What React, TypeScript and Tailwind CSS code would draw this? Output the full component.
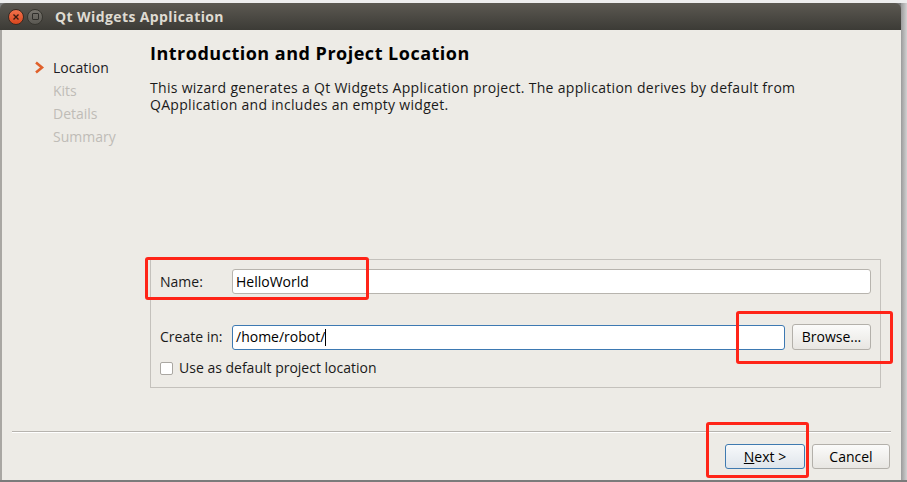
import React from "react";

// Qt Creator "new project" wizard, first page, with red marks laid over it
export default function App() {
  const font = { fontFamily: '"Open Sans", "Noto Sans", sans-serif' };

  return (
    <div
      className="relative w-[907px] h-[482px] overflow-hidden bg-[#7b7b7b] text-[14px] text-[#1a1a1a]"
      style={font}
    >
      {/* strip of the desktop behind the window */}
      <div className="h-[3px] bg-[#eeeeee]" />

      <div className="flex">
        {/* --- Window --- */}
        <div className="w-[901px] flex flex-col">
          {/* title bar */}
          <div className="h-[27px] rounded-t-[6px] bg-gradient-to-b from-[#5c5952] to-[#3c3b36] flex items-center pl-[8px]">
            <div className="w-[16px] h-[16px] rounded-full bg-gradient-to-b from-[#f3714a] to-[#d9461d] border border-[#3a2a22] flex items-center justify-center">
              <svg width="8" height="8" viewBox="0 0 8 8">
                <path d="M1.5 1.5 L6.5 6.5 M6.5 1.5 L1.5 6.5" stroke="#3b1b10" strokeWidth="1.4" />
              </svg>
            </div>
            <div className="ml-[3px] w-[16px] h-[16px] rounded-full bg-gradient-to-b from-[#77746d] to-[#5a5852] border border-[#36352f] flex items-center justify-center">
              <div className="w-[7px] h-[7px] border border-[#2f2e2a] rounded-[1px]" />
            </div>
            <div className="ml-[12px] font-bold text-[14px] tracking-[0.4px] text-[#dfdbd2]">Qt Widgets Application</div>
          </div>

          {/* window body */}
          <div className="h-[450px] bg-[#edebe6] border-l-2 border-[#a9a7a3] flex flex-col">
            <div className="flex h-[401px]">
              {/* sidebar */}
              <div className="w-[148px] pt-[26px] pl-[32px]">
                <div className="flex items-center h-[23px]">
                  <svg width="11" height="13" viewBox="0 0 11 13" className="mr-[8px]">
                    <path d="M2 1.5 L8 6.5 L2 11.5" fill="none" stroke="#e0602a" strokeWidth="2.6" strokeLinejoin="miter" />
                  </svg>
                  <span className="text-[#1c1c24]">Location</span>
                </div>
                <div className="pl-[19px] h-[23px] leading-[23px] text-[#bfbcb7]">Kits</div>
                <div className="pl-[19px] h-[23px] leading-[23px] text-[#bfbcb7]">Details</div>
                <div className="pl-[19px] h-[23px] leading-[23px] text-[#bfbcb7]">Summary</div>
              </div>

              {/* page */}
              <div className="flex-1 pt-[11px]">
                <h1 className="font-bold text-[18px] leading-[24px] tracking-[0.5px] text-black">
                  Introduction and Project Location
                </h1>
                <p className="mt-[14px] text-[14px] leading-[17px] tracking-[0.3px] text-[#1a1a1a] w-[700px]">
                  This wizard generates a Qt Widgets Application project. The application derives by default from
                  <br />
                  QApplication and includes an empty widget.
                </p>

                {/* group box */}
                <div className="mt-[146px] w-[731px] border border-[#c4c1bc] pt-[9px] pl-[9px] pr-[9px] pb-[11px] leading-[16px]">
                  <div className="flex items-center">
                    <div className="w-[72px]">Name:</div>
                    <div className="flex-1 h-[25px] bg-white border border-[#b7b4ae] rounded-[3px] pl-[3px] flex items-center text-black">
                      HelloWorld
                    </div>
                  </div>
                  <div className="flex items-center mt-[30px]">
                    <div className="w-[72px]">Create in:</div>
                    <div className="flex-1 h-[25px] bg-white border border-[#3d79b2] rounded-[3px] pl-[3px] flex items-center text-black">
                      /home/robot/
                      <span className="w-px h-[17px] bg-black" />
                    </div>
                    <button className="ml-[7px] w-[79px] h-[26px] rounded-[3px] border border-[#b3b0aa] bg-gradient-to-b from-[#fbfbfa] to-[#e8e6e2] text-black">
                      Browse...
                    </button>
                  </div>
                  <div className="flex items-center mt-[10px] h-[16px]">
                    <div className="w-[13px] h-[13px] bg-white border border-[#aaa7a2] rounded-[2px]" />
                    <span className="ml-[6px]">Use as default project location</span>
                  </div>
                </div>
              </div>
            </div>

            {/* separator */}
            <div className="ml-[10px] mr-[10px] border-t border-[#b7b4af] border-b border-b-white" />

            {/* buttons */}
            <div className="flex justify-end pr-[11px] mt-[11px]">
              <button className="w-[80px] h-[25px] rounded-[3px] border border-[#3f7ab0] bg-gradient-to-b from-[#f7f9fb] to-[#dfe5eb] text-black">
                <span className="underline">N</span>ext &gt;
              </button>
              <button className="ml-[7px] w-[78px] h-[25px] rounded-[3px] border border-[#b3b0aa] bg-gradient-to-b from-[#fbfbfa] to-[#e8e6e2] text-black">
                Cancel
              </button>
            </div>
          </div>
        </div>

        {/* window shadow on the right */}
        <div className="flex-1 h-[477px] bg-gradient-to-r from-[#9b9b9b] to-[#d2d2d2]" />
      </div>

      {/* --- red marks --- */}
      <div className="absolute left-[145px] top-[257px] w-[224px] h-[43px] border-[3px] border-[#ff2418] rounded-[3px]" />
      <div className="absolute left-[736px] top-[311px] w-[157px] h-[53px] border-[3px] border-[#ff2418] rounded-[3px]" />
      <div className="absolute left-[706px] top-[422px] w-[103px] h-[56px] border-[3px] border-[#ff2418] rounded-[3px]" />
    </div>
  );
}
